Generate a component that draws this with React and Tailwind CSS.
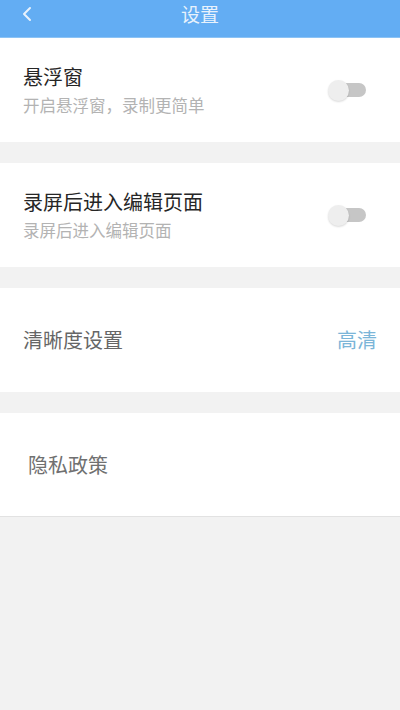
import React from "react";

function Toggle() {
  return (
    <div className="relative w-[38px] h-[22px] flex items-center">
      <div className="absolute right-0 w-[28px] h-[14px] rounded-full bg-[#c6c6c6]" />
      <div className="absolute left-0 w-[21px] h-[21px] rounded-full bg-[#eeeeee] shadow-[0_1px_2px_rgba(0,0,0,0.15)]" />
    </div>
  );
}

function SwitchRow({ title, desc }) {
  return (
    <div className="h-[104px] bg-white flex items-center justify-between pl-[23px] pr-[34px]">
      <div className="flex flex-col">
        <span className="text-[20px] leading-[24px] text-[#262626]">{title}</span>
        <span className="mt-[6px] text-[16.5px] leading-[20px] text-[#b3b3b3]">{desc}</span>
      </div>
      <Toggle />
    </div>
  );
}

export default function App() {
  return (
    <div
      className="w-[400px] min-h-[710px] bg-[#f2f2f2]"
      style={{ fontFamily: '"Noto Sans CJK SC", "Noto Sans", sans-serif' }}
    >
      <header className="relative h-[38px] bg-[#63adf3] flex items-center justify-center border-b border-[#8cc3f5]">
        <svg className="absolute left-[21px] top-[6px]" width="12" height="16" viewBox="0 0 12 16" fill="none">
          <path d="M9 2 L3 8 L9 14" stroke="#e8f2fc" strokeWidth="2" strokeLinecap="round" strokeLinejoin="round" />
        </svg>
        <span className="text-[19px] leading-[24px] text-[#e8f2fc] -mt-[10px]">设置</span>
      </header>

      <div className="flex flex-col gap-[21px]">
        <SwitchRow title="悬浮窗" desc="开启悬浮窗，录制更简单" />
        <SwitchRow title="录屏后进入编辑页面" desc="录屏后进入编辑页面" />

        <div className="h-[104px] bg-white flex items-center justify-between pl-[23px] pr-[23px]">
          <span className="text-[20px] leading-[24px] text-[#666666]">清晰度设置</span>
          <span className="text-[20px] leading-[24px] text-[#7bb5d8]">高清</span>
        </div>

        <div className="h-[104px] bg-white flex items-center pl-[28px] border-b border-[#e2e2e2]">
          <span className="text-[20px] leading-[24px] text-[#707070]">隐私政策</span>
        </div>
      </div>
    </div>
  );
}
